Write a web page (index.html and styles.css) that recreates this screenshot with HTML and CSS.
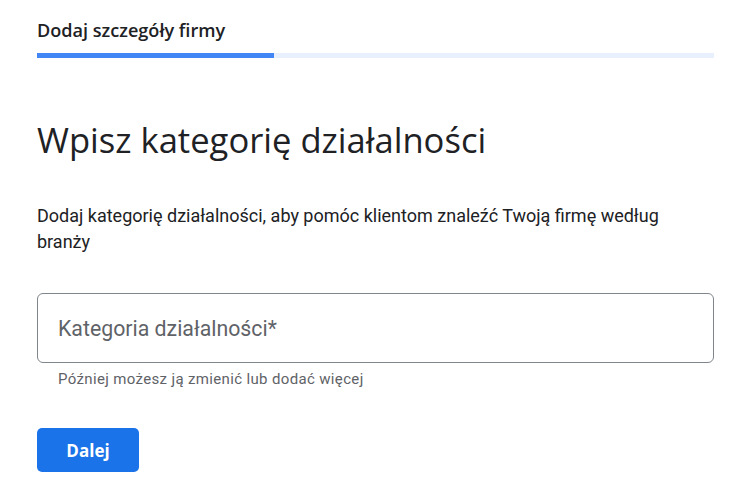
FILE: index.html
```html
<!DOCTYPE html>
<html lang="pl">
<head>
<meta charset="utf-8">
<link rel="stylesheet" href="styles.css">
</head>
<body>
<div class="page">
  <div class="top">
    <div class="step">Dodaj szczegóły firmy</div>
    <div class="progress"><div class="fill" style="width:35%"></div></div>
  </div>
  <h1 class="title">Wpisz kategorię działalności</h1>
  <p class="desc">Dodaj kategorię działalności, aby pomóc klientom znaleźć Twoją firmę według branży</p>
  <div class="field">
    <div class="input"><span class="placeholder">Kategoria działalności*</span></div>
    <div class="helper">Później możesz ją zmienić lub dodać więcej</div>
  </div>
  <button class="btn">Dalej</button>
</div>
</body>
</html>
```
FILE: styles.css
```css
html, body { margin: 0; padding: 0; background: #fff; }
body { font-family: Roboto, "Noto Sans", sans-serif; color: #202124; }
.page { padding: 18px 38px 0 37px; display: flex; flex-direction: column; align-items: flex-start; }
.top { width: 100%; }
.step { font-family: "Open Sans", Roboto, sans-serif; font-weight: 600; font-size: 18.1px; line-height: 24px; color: #202124; }
.progress { margin-top: 11px; height: 5px; background: #e8f0fe; width: 100%; }
.fill { height: 100%; background: #4285f4; }
.title { font-family: "Open Sans", Roboto, sans-serif; font-weight: 400; font-size: 34.6px; line-height: 40px; margin: 62px 0 0; color: #202124; }
.desc { font-size: 18px; line-height: 26px; margin: 43px 0 0; color: #202124; max-width: 650px; }
.field { width: 100%; margin-top: 38px; }
.input { box-sizing: border-box; height: 70px; border: 1px solid #80868b; border-radius: 6px; display: flex; align-items: center; padding-left: 20px; }
.placeholder { font-size: 21.3px; color: #5f6368; }
.helper { font-size: 15px; line-height: 20px; color: #5f6368; padding-left: 21px; margin-top: 6px; letter-spacing: 0.35px; }
.btn { margin-top: 39px; width: 102px; height: 44px; border: none; border-radius: 5px; background: #1a73e8; color: #fff; font-family: "Open Sans", Roboto, sans-serif; font-weight: 700; font-size: 17px; }
```
